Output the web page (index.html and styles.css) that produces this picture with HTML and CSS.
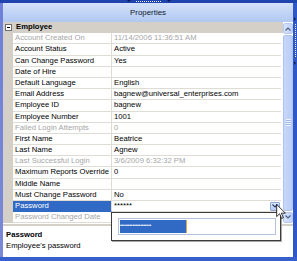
FILE: index.html
```html
<!DOCTYPE html>
<html>
<head>
<meta charset="utf-8">
<link rel="stylesheet" href="styles.css">
</head>
<body>
<div class="window">
  <div class="topstrip">
    <span class="tri"></span>
    <span class="dots"></span>
    <span class="tri"></span>
  </div>
  <div class="main">
    <div class="leftedge"></div>
    <div class="content">
      <div class="titlebar">Properties</div>
      <div class="gridwrap">
        <div class="grid">
          <div class="row cat">
            <div class="margin"><span class="expander"></span></div>
            <div class="catname">Employee</div>
          </div>
          <div class="row dis"><div class="margin"></div><div class="label">Account Created On</div><div class="value">11/14/2006 11:36:51 AM</div></div>
          <div class="row"><div class="margin"></div><div class="label">Account Status</div><div class="value">Active</div></div>
          <div class="row"><div class="margin"></div><div class="label">Can Change Password</div><div class="value">Yes</div></div>
          <div class="row"><div class="margin"></div><div class="label">Date of Hire</div><div class="value"></div></div>
          <div class="row"><div class="margin"></div><div class="label">Default Language</div><div class="value">English</div></div>
          <div class="row"><div class="margin"></div><div class="label">Email Address</div><div class="value">bagnew@universal_enterprises.com</div></div>
          <div class="row"><div class="margin"></div><div class="label">Employee ID</div><div class="value">bagnew</div></div>
          <div class="row"><div class="margin"></div><div class="label">Employee Number</div><div class="value">1001</div></div>
          <div class="row dis"><div class="margin"></div><div class="label">Failed Login Attempts</div><div class="value">0</div></div>
          <div class="row"><div class="margin"></div><div class="label">First Name</div><div class="value">Beatrice</div></div>
          <div class="row"><div class="margin"></div><div class="label">Last Name</div><div class="value">Agnew</div></div>
          <div class="row dis"><div class="margin"></div><div class="label">Last Successful Login</div><div class="value">3/6/2009 6:32:32 PM</div></div>
          <div class="row"><div class="margin"></div><div class="label">Maximum Reports Override</div><div class="value">0</div></div>
          <div class="row"><div class="margin"></div><div class="label">Middle Name</div><div class="value"></div></div>
          <div class="row"><div class="margin"></div><div class="label">Must Change Password</div><div class="value">No</div></div>
          <div class="row sel"><div class="margin"></div><div class="label">Password</div><div class="value">******<span class="ddbtn"><svg width="6" height="4" viewBox="0 0 6 4"><path d="M0.5 0.5 L3 3 L5.5 0.5" fill="none" stroke="#2d3f6a" stroke-width="1.2"/></svg></span></div></div>
          <div class="row dis"><div class="margin"></div><div class="label">Password Changed Date</div><div class="value"></div></div>
        </div>
        <div class="scroll">
          <div class="sbtn"><svg width="6" height="4" viewBox="0 0 6 4"><path d="M0.5 3.5 L3 1 L5.5 3.5" fill="none" stroke="#4d6185" stroke-width="1.2"/></svg></div>
          <div class="thumb"><span class="grip"></span></div>
          <div class="sbtn"><svg width="6" height="4" viewBox="0 0 6 4"><path d="M0.5 0.5 L3 3 L5.5 0.5" fill="none" stroke="#4d6185" stroke-width="1.2"/></svg></div>
        </div>
      </div>
      <div class="sep"></div>
      <div class="desc">
        <div class="desctitle">Password</div>
        <div class="desctext">Employee's password</div>
      </div>
    </div>
    <div class="rightedge">
      <span class="rtri"></span>
      <span class="rdots"></span>
      <span class="rtri"></span>
    </div>
  </div>
  <div class="bottomedge"></div>

  <div class="popup">
    <div class="pwbox"><span class="pwsel">••••••••••••••••••••</span></div>
  </div>
  <svg class="cursor" width="10" height="15" viewBox="0 0 12 19">
    <path d="M0.5 0.5 L0.5 16 L4.2 12.4 L6.8 18.3 L9 17.4 L6.5 11.6 L11.5 11.6 Z" fill="#fff" stroke="#000" stroke-width="1"/>
  </svg>
</div>
</body>
</html>
```
FILE: styles.css
```css
html, body {
  margin: 0;
  padding: 0;
  width: 297px;
  height: 261px;
  overflow: hidden;
  font-family: "Liberation Sans", Arial, sans-serif;
  font-size: 7.7px;
}
.window {
  position: relative;
  width: 297px;
  height: 261px;
  display: flex;
  flex-direction: column;
  background: #3a60cc;
}
.topstrip {
  height: 3px;
  background: #1f44ad;
  display: flex;
  justify-content: center;
  align-items: flex-start;
  gap: 5px;
}
.tri {
  width: 0;
  height: 0;
  border-left: 2px solid transparent;
  border-right: 2px solid transparent;
  border-top: 2px solid #0c1d55;
}
.dots {
  width: 26px;
  height: 1px;
  margin-top: 1px;
  background: repeating-linear-gradient(90deg, #e8eefc 0 1px, transparent 1px 2px);
}
.main {
  flex: 1;
  display: flex;
  min-height: 0;
}
.leftedge {
  width: 3px;
  background: linear-gradient(#6f80da, #7b88d8);
}
.rightedge {
  width: 4px;
  background: #2f57c8;
  display: flex;
  flex-direction: column;
  align-items: center;
  padding-top: 14px;
  gap: 3px;
}
.rtri {
  width: 0;
  height: 0;
  border-top: 2px solid transparent;
  border-bottom: 2px solid transparent;
  border-left: 2px solid #0c1d55;
}
.rdots {
  width: 1px;
  height: 34px;
  background: repeating-linear-gradient(180deg, #e8eefc 0 1px, transparent 1px 2px);
}
.content {
  flex: 1;
  display: flex;
  flex-direction: column;
  min-width: 0;
}
.titlebar {
  height: 19px;
  background: linear-gradient(#d4e1f9, #b0c8f1);
  color: #0f1a33;
  display: flex;
  align-items: center;
  justify-content: center;
  font-size: 7.9px;
}
.gridwrap {
  height: 201.6px;
  display: flex;
}
.grid {
  flex: 1;
  background: #fff;
  display: flex;
  flex-direction: column;
}
.row {
  display: flex;
  height: 11.2px;
  line-height: 10.2px;
  white-space: nowrap;
  color: #000;
}
.margin {
  width: 10px;
  background: #d4d0c8;
  flex: none;
  display: flex;
  align-items: center;
  justify-content: center;
}
.label {
  width: 96px;
  padding-left: 2px;
  border-right: 1px solid #dedcd4;
  border-bottom: 1px solid #dedcd4;
  flex: none;
  overflow: hidden;
}
.value {
  flex: 1;
  position: relative;
  padding-left: 2px;
  border-bottom: 1px solid #dedcd4;
  margin-right: 2px;
}
.dis {
  color: #a6a6a6;
}
.cat {
  background: #d4d0c8;
}
.catname {
  font-weight: bold;
  padding-left: 3px;
}
.expander {
  width: 5px;
  height: 5px;
  border: 1px solid #6f6f6f;
  background: #fff linear-gradient(#000, #000) no-repeat center / 3px 1px;
}
.sel .label {
  background: #316ac5;
  color: #fff;
  border-bottom-color: #316ac5;
}
.ddbtn {
  position: absolute;
  right: 1px;
  top: 0.5px;
  width: 8px;
  height: 7px;
  border: 1px solid #8ea6d6;
  border-radius: 1px;
  background: linear-gradient(#dbe6fd, #b7cbf7);
  display: flex;
  align-items: center;
  justify-content: center;
}
.scroll {
  width: 10px;
  background: #fff;
  display: flex;
  flex-direction: column;
}
.sbtn {
  height: 9px;
  margin: 1px 0;
  border: 1px solid #b6c8f0;
  border-radius: 2px;
  background: linear-gradient(90deg, #d6e2fd, #c0d2fa);
  display: flex;
  align-items: center;
  justify-content: center;
}
.thumb {
  flex: 1;
  border: 1px solid #aec2ee;
  border-radius: 2px;
  background: linear-gradient(90deg, #c8d7fb, #b9cdf8);
  display: flex;
  align-items: center;
  justify-content: center;
}
.grip {
  width: 5px;
  height: 7px;
  background: repeating-linear-gradient(180deg, #eef3fe 0 1px, #9fb6e8 1px 2px);
}
.sep {
  height: 2.4px;
  background: #d4d0c8;
}
.desc {
  flex: 1;
  background: #fff;
  padding: 3px 3px 0;
  line-height: 11px;
  color: #000;
}
.desctitle {
  font-weight: bold;
}
.bottomedge {
  height: 4px;
  background: #3760cd;
}
.popup {
  position: absolute;
  left: 111px;
  top: 212px;
  width: 158px;
  height: 22px;
  border: 1px solid #3c3c3c;
  box-shadow: 1px 1px 0 #a8a8a8;
  background: #fff;
  padding: 5px 4px 0 6px;
  box-sizing: content-box;
}
.pwbox {
  height: 13px;
  border: 1px solid #b3c3de;
  padding: 1px;
  display: flex;
  align-items: stretch;
}
.pwsel {
  background: #316ac5;
  color: #fff;
  font-size: 5px;
  line-height: 11px;
  letter-spacing: -0.2px;
  width: 66px;
  overflow: hidden;
  white-space: nowrap;
  border-right: 1px solid #d8a84a;
}
.cursor {
  position: absolute;
  left: 276px;
  top: 204px;
}
```
